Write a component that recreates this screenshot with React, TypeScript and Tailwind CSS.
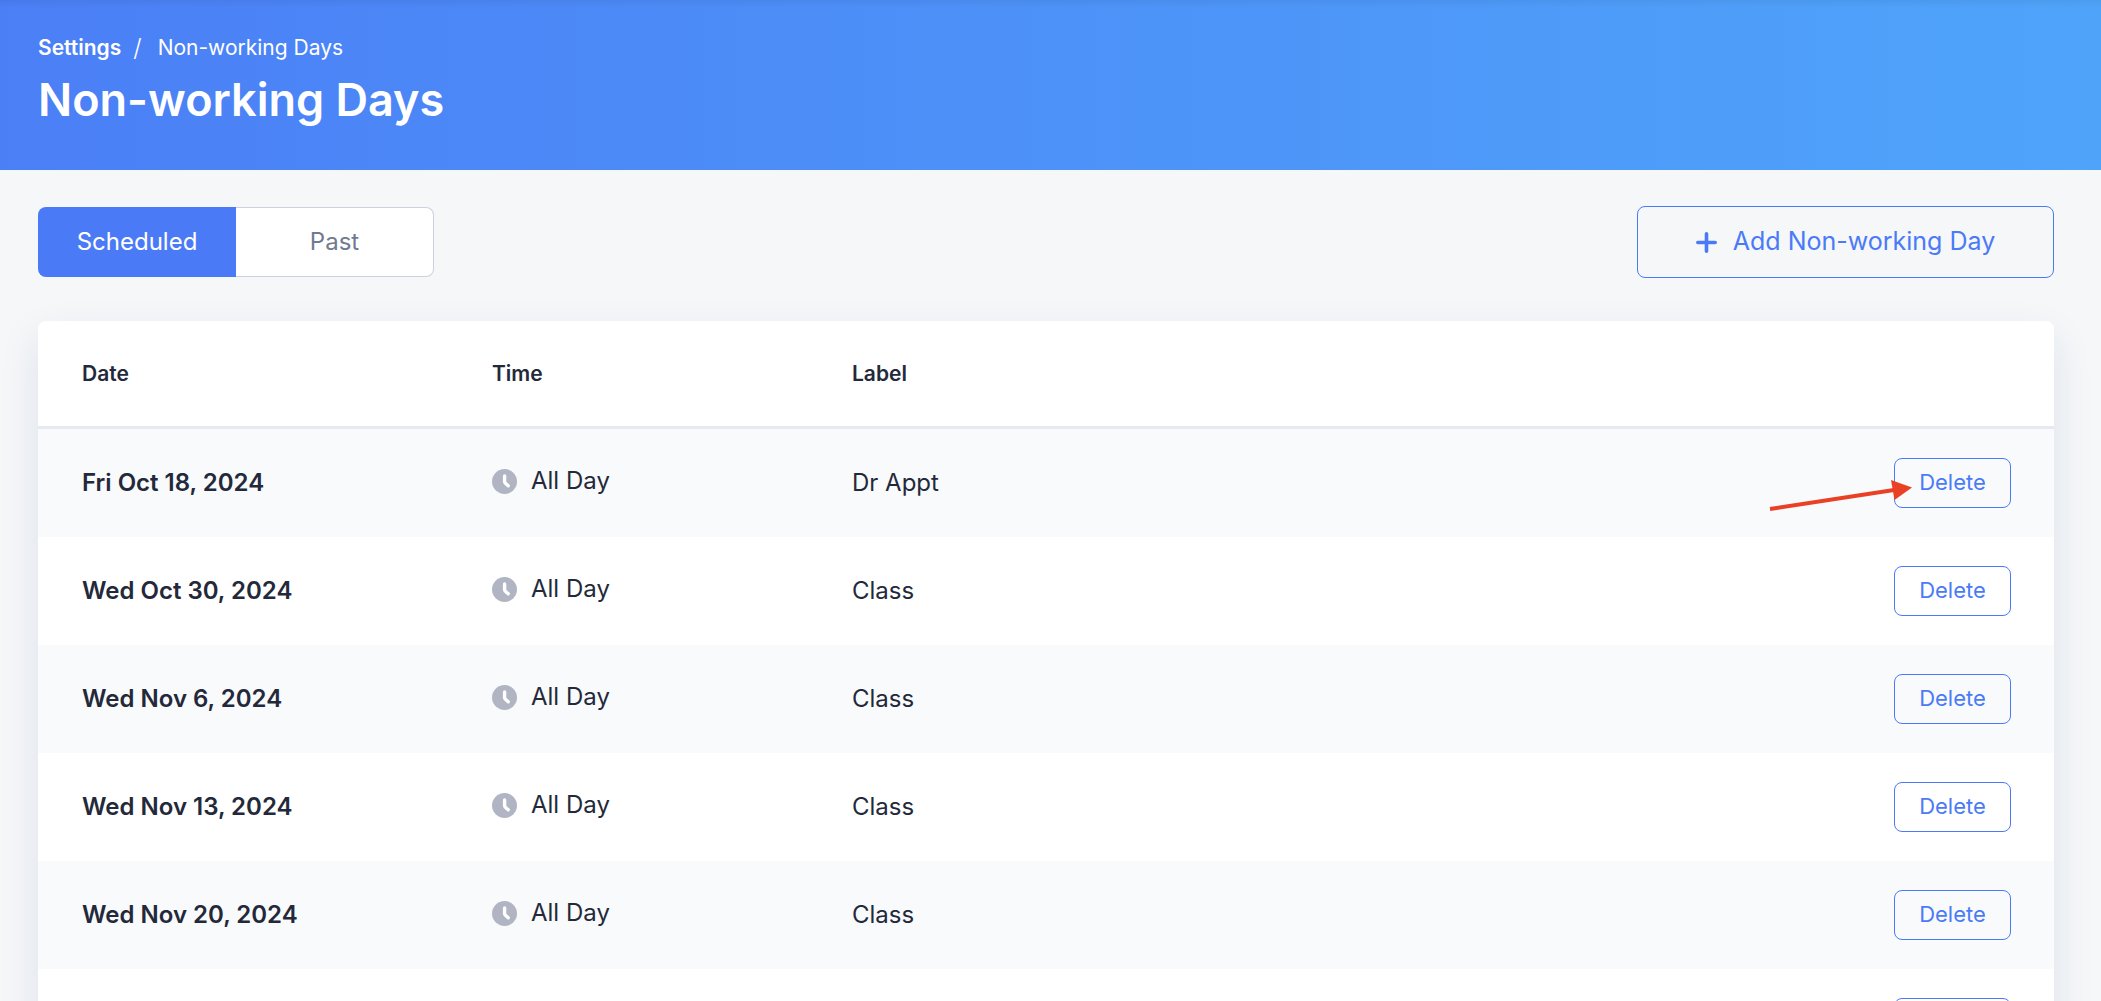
/**
 * Settings page: Non-working Days
 * Lists the scheduled days off, each with its own delete action.
 */

interface NonWorkingDay {
  date: string;
  time: string;
  label: string;
}

const DAYS: NonWorkingDay[] = [
  { date: "Fri Oct 18, 2024", time: "All Day", label: "Dr Appt" },
  { date: "Wed Oct 30, 2024", time: "All Day", label: "Class" },
  { date: "Wed Nov 6, 2024", time: "All Day", label: "Class" },
  { date: "Wed Nov 13, 2024", time: "All Day", label: "Class" },
  { date: "Wed Nov 20, 2024", time: "All Day", label: "Class" },
  { date: "Wed Nov 27, 2024", time: "All Day", label: "Class" },
];

function ClockIcon() {
  return (
    <svg viewBox="0 0 25 25" className="size-[25px] shrink-0" aria-hidden="true">
      <circle cx="12.5" cy="12.5" r="12.5" fill="#b1b5c3" />
      <path
        d="M12.6 7v5.4q0 1 .7 1.8l2.9 2.6"
        fill="none"
        stroke="#fff"
        strokeWidth="3.4"
        strokeLinecap="round"
        strokeLinejoin="round"
      />
    </svg>
  );
}

function PlusIcon() {
  return (
    <svg viewBox="0 0 21 21" className="size-[21px]" aria-hidden="true">
      <path d="M10.5 1.8v17.4M1.8 10.5h17.4" stroke="currentColor" strokeWidth="3.6" strokeLinecap="round" />
    </svg>
  );
}

function PointerArrow() {
  return (
    <svg
      viewBox="0 0 144 36"
      className="pointer-events-none absolute top-[20px] -left-[125px] h-[36px] w-[144px]"
      aria-hidden="true"
    >
      <path d="M1 31 L125 12" stroke="#ea4025" strokeWidth="4" />
      <path d="M122 2 L143 9.5 L125.5 22 Z" fill="#ea4025" />
    </svg>
  );
}

function PageHeader() {
  return (
    <header className="bg-gradient-to-r from-[#4b7ff6] to-[#4fa4fa]">
      <div className="h-2 bg-gradient-to-b from-black/5 to-transparent" />
      <div className="px-[38px] pt-6 pb-10 text-white">
        <nav aria-label="Breadcrumb" className="flex items-center text-[21px] leading-8">
          <a href="#settings" className="font-semibold">
            Settings
          </a>
          <span className="mr-4 ml-3 text-2xl leading-8 font-light">/</span>
          <span>Non-working Days</span>
        </nav>
        <h1 className="mt-1.5 text-[45px] leading-[60px] font-semibold">Non-working Days</h1>
      </div>
    </header>
  );
}

function Toolbar() {
  return (
    <div className="flex items-center justify-between">
      <div className="flex h-[70px]">
        <button type="button" className="w-[198px] rounded-l-lg bg-[#4b7af7] text-2xl text-white">
          Scheduled
        </button>
        <button
          type="button"
          className="w-[198px] rounded-r-lg border border-l-0 border-[#cdd1df] bg-white text-2xl text-[#717a90]"
        >
          Past
        </button>
      </div>
      <button
        type="button"
        className="flex h-[72px] w-[417px] items-center justify-center gap-4 rounded-lg border border-[#4b7af7] text-[25px] text-[#4b7af7]"
      >
        <PlusIcon />
        Add Non-working Day
      </button>
    </div>
  );
}

function DaysTable() {
  return (
    <div className="mt-[43px] overflow-hidden rounded-lg bg-white shadow-[0_16px_40px_rgba(18,38,99,0.1)]">
      <table className="w-full table-fixed border-separate border-spacing-0 text-left text-2xl text-[#23293a]">
        <colgroup>
          <col className="w-[410px]" />
          <col className="w-[360px]" />
          <col />
          <col className="w-[240px]" />
        </colgroup>
        <thead>
          <tr className="h-[108px] text-[21px] *:border-b-[3px] *:border-[#e4eaf0]">
            <th className="pl-11 font-semibold">Date</th>
            <th className="pl-11 font-semibold">Time</th>
            <th className="pl-11 font-semibold">Label</th>
            <td />
          </tr>
        </thead>
        <tbody>
          {DAYS.map((day, index) => (
            <tr key={day.date} className="h-[108px] odd:bg-[#f9fafc]">
              <th scope="row" className="pl-11 font-semibold">
                {day.date}
              </th>
              <td className="pl-11">
                <div className="flex items-center gap-[14px] pb-1">
                  <ClockIcon />
                  {day.time}
                </div>
              </td>
              <td className="pl-11">{day.label}</td>
              <td className="pr-[43px]">
                <div className="relative ml-auto w-[117px]">
                  <button
                    type="button"
                    aria-label={`Delete ${day.date}`}
                    className="block h-[50px] w-full rounded-lg border border-[#4b7af7] text-[22px] text-[#4b7af7]"
                  >
                    Delete
                  </button>
                  {index === 0 && <PointerArrow />}
                </div>
              </td>
            </tr>
          ))}
        </tbody>
      </table>
    </div>
  );
}

export default function App() {
  return (
    <div className="h-screen overflow-hidden bg-[#f5f7f9] font-['Inter',sans-serif]">
      <PageHeader />
      <main className="pt-9 pr-[47px] pl-[38px]">
        <Toolbar />
        <DaysTable />
      </main>
    </div>
  );
}
